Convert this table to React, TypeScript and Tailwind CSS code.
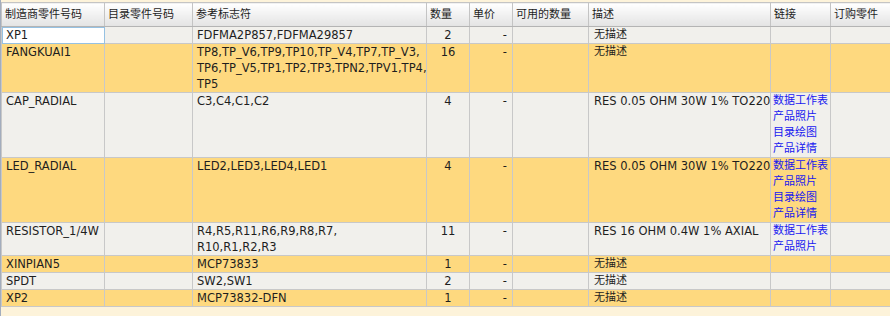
import React from 'react';

type Row = {
  part: string;
  refs: string[];
  qty: string;
  desc: string;
  links: string[];
  yellow: boolean;
  selected?: boolean;
};

const rows: Row[] = [
  { part: 'XP1', refs: ['FDFMA2P857,FDFMA29857'], qty: '2', desc: '无描述', links: [], yellow: false, selected: true },
  {
    part: 'FANGKUAI1',
    refs: ['TP8,TP_V6,TP9,TP10,TP_V4,TP7,TP_V3,', 'TP6,TP_V5,TP1,TP2,TP3,TPN2,TPV1,TP4,', 'TP5'],
    qty: '16',
    desc: '无描述',
    links: [],
    yellow: true,
  },
  { part: 'CAP_RADIAL', refs: ['C3,C4,C1,C2'], qty: '4', desc: 'RES 0.05 OHM 30W 1% TO220', links: ['数据工作表', '产品照片', '目录绘图', '产品详情'], yellow: false },
  { part: 'LED_RADIAL', refs: ['LED2,LED3,LED4,LED1'], qty: '4', desc: 'RES 0.05 OHM 30W 1% TO220', links: ['数据工作表', '产品照片', '目录绘图', '产品详情'], yellow: true },
  { part: 'RESISTOR_1/4W', refs: ['R4,R5,R11,R6,R9,R8,R7,', 'R10,R1,R2,R3'], qty: '11', desc: 'RES 16 OHM 0.4W 1% AXIAL', links: ['数据工作表', '产品照片'], yellow: false },
  { part: 'XINPIAN5', refs: ['MCP73833'], qty: '1', desc: '无描述', links: [], yellow: true },
  { part: 'SPDT', refs: ['SW2,SW1'], qty: '2', desc: '无描述', links: [], yellow: false },
  { part: 'XP2', refs: ['MCP73832-DFN'], qty: '1', desc: '无描述', links: [], yellow: true },
];

const headers = ['制造商零件号码', '目录零件号码', '参考标志符', '数量', '单价', '可用的数量', '描述', '链接', '订购零件'];

const isCjk = (s: string) => /^[\u4e00-\u9fff]+$/.test(s);

export default function App() {
  return (
    <div
      className="w-[890px] h-[316px] overflow-hidden bg-[#fdf3da] border-l border-[#a3adbd] pt-[2px] text-[#1e1e1e]"
      style={{ fontFamily: '"DejaVu Sans", "Noto Sans CJK SC", sans-serif' }}
    >
      <table className="table-fixed border-collapse w-[900px] text-[11.5px] leading-[16px]">
        <colgroup>
          <col className="w-[103px]" />
          <col className="w-[88px]" />
          <col className="w-[234px]" />
          <col className="w-[43px]" />
          <col className="w-[43px]" />
          <col className="w-[76px]" />
          <col className="w-[182px]" />
          <col className="w-[60px]" />
          <col />
        </colgroup>
        <thead>
          <tr className="h-[24px]">
            {headers.map((h) => (
              <th
                key={h}
                className="border border-[#c4c4c4] border-b-[#b4b4b4] bg-gradient-to-b from-white to-[#e3e3e3] px-[3px] text-left font-normal text-[11px] whitespace-nowrap"
              >
                {h}
              </th>
            ))}
          </tr>
        </thead>
        <tbody>
          {rows.map((r) => {
            const bg = r.yellow ? 'bg-[#fed97f]' : 'bg-[#f1f0ec]';
            const cell = `border border-[#c8c8c8] align-top p-0 whitespace-nowrap ${bg}`;
            return (
              <tr key={r.part}>
                <td
                  className={
                    r.selected
                      ? 'border border-[#c8c8c8] align-top px-[4px] bg-white outline outline-1 -outline-offset-1 outline-[#96c1e2]'
                      : `${cell} px-[4px]`
                  }
                >
                  {r.part}
                </td>
                <td className={cell}></td>
                <td className={`${cell} px-[4px]`}>
                  {r.refs.map((l) => (
                    <div key={l}>{l}</div>
                  ))}
                </td>
                <td className={`${cell} text-center`}>{r.qty}</td>
                <td className={`${cell} text-right pr-[5px]`}>-</td>
                <td className={cell}></td>
                <td className={`${cell} px-[5px] ${isCjk(r.desc) ? 'text-[11px]' : ''}`}>{r.desc}</td>
                <td className={`${cell} pl-[2px] text-[11px] text-[#1818f0]`}>
                  {r.links.map((l) => (
                    <div key={l}>{l}</div>
                  ))}
                </td>
                <td className={cell}></td>
              </tr>
            );
          })}
        </tbody>
      </table>
    </div>
  );
}
